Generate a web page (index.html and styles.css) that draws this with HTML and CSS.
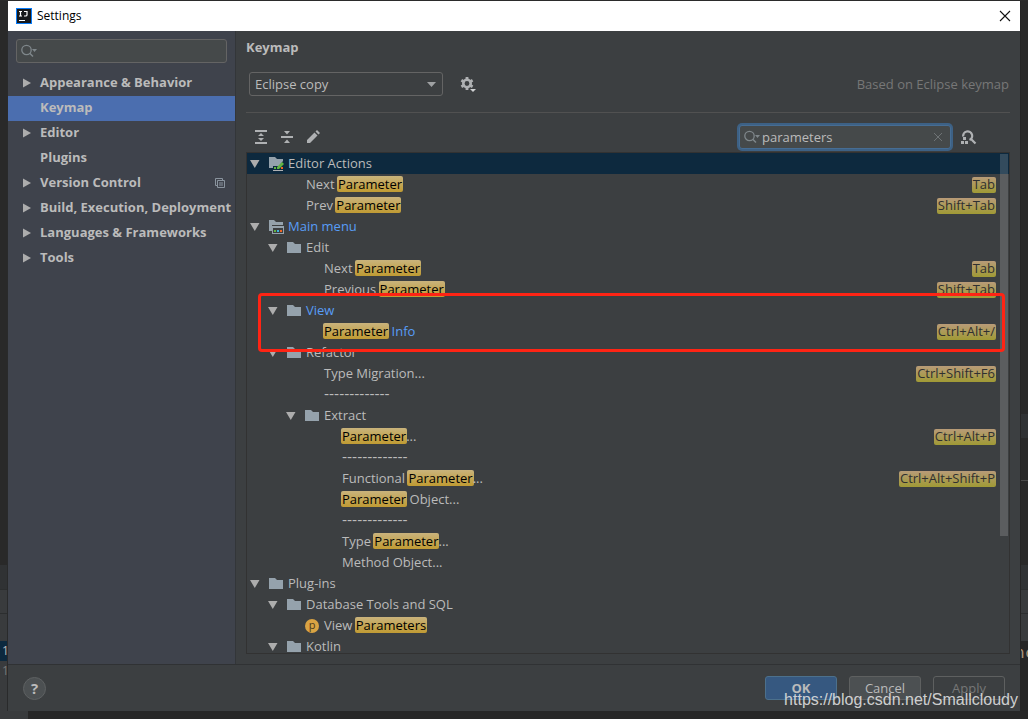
FILE: index.html
```html
<!DOCTYPE html>
<html lang="en">
<head>
<meta charset="utf-8">
<title>Settings</title>
<link rel="stylesheet" href="styles.css">
</head>
<body>
<svg class="defs" aria-hidden="true">
  <symbol id="folder" viewBox="0 0 16 14"><path fill="#95a2ac" d="M0 1h6l2 2h6v9H0z"/></symbol>
  <symbol id="folder-edit" viewBox="0 0 16 14">
    <path fill="#95a2ac" d="M0 0h6l2 2h6v2l-4 5H4v2H0z"/>
    <path fill="#62b543" d="M5 10h2v2H5zM8 10l5-5 2 2-5 5H8z"/>
    <path fill="#f26522" d="M12 10h2v2h-2z"/><path fill="#afb1b3" d="M4 13h10v1H4z"/>
  </symbol>
  <symbol id="folder-menu" viewBox="0 0 16 14">
    <path fill="#95a2ac" d="M0 0h5l2 2h7v3H3v6H0z"/>
    <path fill="#95a2ac" fill-rule="evenodd" d="M3 6h12v8H3zM4 8v5h10V8z"/>
    <path fill="#62b543" d="M5 10h2v2H5z"/><path fill="#40b6e0" d="M8 10h2v2H8z"/><path fill="#f26522" d="M11 10h2v2h-2z"/>
  </symbol>
  <symbol id="down" viewBox="0 0 10 8"><path fill="#adadad" d="M0 0h9.500L4.750 8z"/></symbol>
  <symbol id="right" viewBox="0 0 8 10"><path fill="#adadad" d="M0 0.500 8 5 0 9.500z"/></symbol>
  <symbol id="search" viewBox="0 0 17 14">
    <circle cx="5.500" cy="6" r="4.700" fill="none" stroke="#7f878b" stroke-width="1.300"/>
    <path d="m8.700 9.200 3.300 3.300" stroke="#7f878b" stroke-width="1.500"/><path fill="#7f878b" d="M11 5h5l-2.500 3z"/>
  </symbol>
</svg>
<div class="desktop">
  <div class="strip strip-left">
    <div class="code"></div><div class="gutter h24"></div><div class="panel h24"></div>
    <div class="panel h28"></div><div class="selected h20">1</div><div class="panel plain h50">1</div>
  </div>
  <main class="dialog">
    <header class="titlebar">
      <svg class="logo" viewBox="0 0 16 16"><rect width="16" height="16" fill="#087cfa"/><rect x="1" y="1" width="14" height="14" fill="#17191c"/><path d="M3 3.500h3M4.500 3.500V8M3 8h3M8 3.500h3V7q0 1-1.500 1H8M3 12.500h6" fill="none" stroke="#fff" stroke-width="1.200"/></svg>
      <h1>Settings</h1>
      <button class="close" aria-label="Close"><svg viewBox="0 0 10 10"><path d="m0 0 10 10M10 0 0 10" stroke="#111" stroke-width="1.100"/></svg></button>
    </header>
    <div class="body">
      <aside class="sidebar">
        <div class="field"><svg class="i-search"><use href="#search"/></svg><input aria-label="Search settings"></div>
        <nav>
          <a href="#appearance"><svg class="i-right"><use href="#right"/></svg>Appearance &amp; Behavior</a>
          <a href="#keymap" class="leaf current">Keymap</a>
          <a href="#editor"><svg class="i-right"><use href="#right"/></svg>Editor</a>
          <a href="#plugins" class="leaf">Plugins</a>
          <a href="#vcs"><svg class="i-right"><use href="#right"/></svg>Version Control
            <svg class="i-project" viewBox="0 0 10 10"><path d="M2.500 7.500h-2v-7h7v2M2.500 2.500h7v7h-7zM4 5h4M4 7h4" fill="none" stroke="#8a949e"/></svg></a>
          <a href="#build"><svg class="i-right"><use href="#right"/></svg>Build, Execution, Deployment</a>
          <a href="#languages"><svg class="i-right"><use href="#right"/></svg>Languages &amp; Frameworks</a>
          <a href="#tools"><svg class="i-right"><use href="#right"/></svg>Tools</a>
        </nav>
      </aside>
      <section class="content">
        <h2>Keymap</h2>
        <div class="scheme">
          <div class="combo">
            <select aria-label="Keymap scheme"><option>Eclipse copy</option></select>
            <svg class="combo-arrow" viewBox="0 0 9 5"><path fill="#9fa1a3" d="M0 0h9L4.500 5z"/></svg>
          </div>
          <button class="icon" aria-label="Scheme actions"><svg width="16" height="16" viewBox="0 0 16 16">
            <circle cx="7" cy="7.500" r="3.700" fill="none" stroke="#afb1b3" stroke-width="2.600"/>
            <path d="M7 1v2.500M7 11.500V14M1.400 4.300l2.100 1.200M10.500 9.500l2.100 1.200M1.400 10.700l2.100-1.200M10.500 5.500l2.100-1.200" stroke="#afb1b3" stroke-width="2.800"/>
            <path fill="#3c3f41" d="M9 12h7v4H9z"/><path fill="#d0d2d3" d="M10 13h6l-3 3z"/></svg></button>
          <span class="based">Based on Eclipse keymap</span>
        </div>
        <div class="toolbar">
          <button class="icon" aria-label="Expand all"><svg width="14" height="14" viewBox="0 0 14 14" fill="#afb1b3"><path d="M1 0h12v2H1zM1 12h12v2H1zM7 3l3 3H4zM7 11l3-3H4z"/></svg></button>
          <button class="icon" aria-label="Collapse all"><svg width="14" height="14" viewBox="0 0 14 14" fill="#afb1b3"><path d="M1 6h12v2H1zM4 1h6L7 4.500zM4 13h6L7 9.500z"/></svg></button>
          <button class="icon" aria-label="Edit shortcut"><svg width="14" height="14" viewBox="0 0 14 14" fill="#afb1b3"><path d="m1 10 7.500-7.500 3 3L4 13H1zM9.500 1.500 11 0l3 3-1.500 1.500z"/></svg></button>
          <div class="field focus"><svg class="i-search"><use href="#search"/></svg><input aria-label="Search actions" value="parameters">
            <button class="clear" aria-label="Clear"><svg viewBox="0 0 8 8"><path d="m0 0 8 8M8 0 0 8" stroke="#6e7375"/></svg></button></div>
          <button class="icon" aria-label="Find by shortcut"><svg width="16" height="15" viewBox="0 0 16 15"><path d="M2.200 6.500A4.500 4.500 0 1 1 8.500 10M9.500 8.500l5 5" fill="none" stroke="#afb1b3" stroke-width="2.200"/><path fill="#afb1b3" d="M2 7h3v3H2zM0 11h3v3H0zM4 11h3v3H4z"/></svg></button>
        </div>
        <div class="results">
          <ul class="tree">
            <li class="row picked"><svg class="i-down"><use href="#down"/></svg><svg class="i-folder"><use href="#folder-edit"/></svg>Editor Actions</li>
            <li class="row l1"><span class="name">Next <mark>Parameter</mark></span><kbd>Tab</kbd></li>
            <li class="row l1"><span class="name">Prev <mark>Parameter</mark></span><kbd>Shift+Tab</kbd></li>
            <li class="row changed"><svg class="i-down"><use href="#down"/></svg><svg class="i-folder"><use href="#folder-menu"/></svg>Main menu</li>
            <li class="row l1"><svg class="i-down"><use href="#down"/></svg><svg class="i-folder"><use href="#folder"/></svg>Edit</li>
            <li class="row l2"><span class="name">Next <mark>Parameter</mark></span><kbd>Tab</kbd></li>
            <li class="row l2"><span class="name">Previous <mark>Parameter</mark></span><kbd>Shift+Tab</kbd></li>
            <li class="row l1 changed"><svg class="i-down"><use href="#down"/></svg><svg class="i-folder"><use href="#folder"/></svg>View</li>
            <li class="row l2 changed"><span class="name"><mark>Parameter</mark> Info</span><kbd>Ctrl+Alt+/</kbd></li>
            <li class="row l1"><svg class="i-down"><use href="#down"/></svg><svg class="i-folder"><use href="#folder"/></svg>Refactor</li>
            <li class="row l2"><span class="name">Type Migration...</span><kbd>Ctrl+Shift+F6</kbd></li>
            <li class="row l2"><span class="name divider">-------------</span></li>
            <li class="row l2"><svg class="i-down"><use href="#down"/></svg><svg class="i-folder"><use href="#folder"/></svg>Extract</li>
            <li class="row l3"><span class="name"><mark>Parameter</mark>...</span><kbd>Ctrl+Alt+P</kbd></li>
            <li class="row l3"><span class="name divider">-------------</span></li>
            <li class="row l3"><span class="name">Functional <mark>Parameter</mark>...</span><kbd>Ctrl+Alt+Shift+P</kbd></li>
            <li class="row l3"><span class="name"><mark>Parameter</mark> Object...</span></li>
            <li class="row l3"><span class="name divider">-------------</span></li>
            <li class="row l3"><span class="name">Type <mark>Parameter</mark>...</span></li>
            <li class="row l3"><span class="name">Method Object...</span></li>
            <li class="row"><svg class="i-down"><use href="#down"/></svg><svg class="i-folder"><use href="#folder"/></svg>Plug-ins</li>
            <li class="row l1"><svg class="i-down"><use href="#down"/></svg><svg class="i-folder"><use href="#folder"/></svg>Database Tools and SQL</li>
            <li class="row l2 with-icon"><span class="prop">p</span><span>View <mark>Parameters</mark></span></li>
            <li class="row l1"><svg class="i-down"><use href="#down"/></svg><svg class="i-folder"><use href="#folder"/></svg>Kotlin</li>
          </ul>
          <div class="thumb"></div>
          <div class="callout"></div>
        </div>
      </section>
    </div>
    <footer class="footer">
      <button class="help" aria-label="Help">?</button>
      <button class="btn primary">OK</button>
      <button class="btn">Cancel</button>
      <button class="btn off" disabled>Apply</button>
    </footer>
  </main>
  <div class="strip strip-right">
    <div class="code"></div><div class="gutter h24"></div><div class="code h42"></div><div class="code lined h85"></div>
    <div class="gutter h24"></div><div class="panel h24"></div><div class="panel h28"></div><div class="code-text h70">nc</div>
  </div>
  <div class="bottom"></div>
  <div class="watermark">https://blog.csdn.net/Smallcloudy</div>
</div>
</body>
</html>
```
FILE: styles.css
```css
* { box-sizing: border-box; }
body {
  margin: 0;
  background: #2b2b2b;
  color: #bbbbbb;
  font: 13px/21px "Open Sans", "Noto Sans", sans-serif;
}
button, input, select { font: inherit; color: inherit; }
button { padding: 0; border: 0; background: none; }
svg { display: block; flex: none; }
h1, h2, ul { margin: 0; padding: 0; }
.defs { position: absolute; width: 0; height: 0; }

.desktop {
  position: relative;
  display: grid;
  grid-template: 1fr 8px / 8px 1fr 8px;
  height: 100vh;
  padding-top: 1px;
  overflow: hidden;
}
.strip { display: flex; flex-direction: column; overflow: hidden; }
.strip-left { border-right: 1px solid #292a2b; }
.strip-right { border-left: 1px solid #252525; }
.strip > :first-child { flex: 1; }
.code { background: #292929; }
.lined { border-top: 1px solid #4a4a4a; }
.gutter { background: #303234; }
.panel { background: #393b3d; border-top: 1px solid #2c2e2f; }
.selected { background: #0d293e; }
.selected, .plain { padding-left: 2px; font-size: 12px; line-height: 20px; }
.plain { color: #777777; border: 0; }
.code-text {
  background: #262626;
  color: #a8937a;
  font: 16px/24px "DejaVu Sans Mono", monospace;
  text-indent: -6px;
}
.h20 { height: 20px; }
.h24 { height: 24px; }
.h28 { height: 28px; }
.h42 { height: 42px; }
.h50 { height: 50px; }
.h70 { height: 70px; }
.h85 { height: 85px; }
.bottom { grid-column: 1 / -1; background: linear-gradient(90deg, #393b3d 28px, #272727 28px); }

.dialog { display: flex; flex-direction: column; min-width: 0; min-height: 0; background: #3c3f41; }
.titlebar {
  display: flex;
  align-items: center;
  gap: 5px;
  height: 30px;
  padding: 0 10px 1px 8px;
  background: #ffffff;
  color: #000000;
}
.titlebar h1 { flex: 1; font-size: 12px; font-weight: 400; }
.logo { width: 16px; height: 16px; }
.close svg { width: 10px; height: 10px; overflow: visible; }

.body { display: flex; flex: 1; min-height: 0; }
.sidebar {
  flex: none;
  width: 228px;
  padding-top: 8px;
  background: #3f434c;
  border-right: 1px solid #333639;
}
.sidebar .field { margin: 0 8px 8px; }
.field {
  display: flex;
  align-items: center;
  height: 24px;
  padding: 0 4px;
  background: #45494a;
  border: 1px solid #646464;
  border-radius: 3px;
}
.field input { flex: 1; min-width: 0; padding: 0 1px; border: 0; outline: 0; background: none; }
.i-search { width: 17px; height: 14px; }
.sidebar a {
  display: flex;
  align-items: center;
  gap: 9px;
  height: 25px;
  padding: 0 10px 2px 15px;
  color: #bbbbbb;
  font-weight: 700;
  text-decoration: none;
  white-space: nowrap;
}
.sidebar .leaf { padding-left: 32px; }
.sidebar .current { background: #4b6eaf; }
.i-right { width: 8px; height: 10px; }
.i-project { width: 10px; height: 10px; margin-left: auto; }

.content { display: flex; flex: 1; flex-direction: column; min-width: 0; padding: 6px 10px 10px; }
h2 { font-size: 13px; line-height: 20px; }
.scheme {
  display: flex;
  align-items: center;
  gap: 17px;
  height: 56px;
  padding: 0 1px 1px 3px;
  border-bottom: 1px solid #515151;
}
.combo { position: relative; width: 194px; }
.combo select {
  appearance: none;
  display: block;
  width: 100%;
  height: 24px;
  padding: 0 5px;
  background: #3c3f41;
  border: 1px solid #646464;
  border-radius: 3px;
}
.combo-arrow { position: absolute; top: 10px; right: 7px; width: 9px; height: 5px; pointer-events: none; }
.based { margin-left: auto; color: #777777; }
.toolbar { display: flex; align-items: center; gap: 12px; padding: 10px 33px 1px 8px; }
.focus {
  width: 212px;
  margin: 2px -2px 2px auto;
  padding: 0 8px 0 4px;
  border-color: #466d94;
  box-shadow: 0 0 0 2px #3d6185;
}
.clear svg { width: 8px; height: 8px; overflow: visible; }

.results { position: relative; flex: 1; min-height: 0; border: 1px solid #323232; }
.tree { height: 100%; overflow: hidden; list-style: none; }
.row { display: flex; align-items: center; height: 21px; padding: 0 13px 0 3px; white-space: pre; }
.l1 { padding-left: 21px; }
.l2 { padding-left: 39px; }
.l3 { padding-left: 57px; }
.picked { background: #0d293e; }
.changed { color: #589df6; }
.i-down { width: 10px; height: 8px; margin-right: 9px; }
.i-folder { width: 16px; height: 14px; margin-right: 3px; }
.name { margin-left: 38px; }
.divider { font-family: "DejaVu Sans", sans-serif; font-size: 14px; }
.with-icon { padding-left: 58px; }
.prop {
  width: 14px;
  height: 14px;
  margin-right: 5px;
  border-radius: 50%;
  background: #d9a343;
  color: #4a3a1c;
  font-size: 11px;
  line-height: 12px;
  text-align: center;
}
mark, kbd { padding: 0 1px; border-radius: 2px; line-height: 16px; }
mark { display: inline-block; margin: 0 -1px; background: linear-gradient(#c9b37c, #c09b33); color: #000000; }
kbd {
  margin-left: auto;
  padding-bottom: 1px;
  background: linear-gradient(#b89b78, #a09a35);
  color: #303030;
  font-family: inherit;
  font-size: 13px;
  line-height: 15px;
}
.thumb { position: absolute; top: 1px; right: 1px; width: 8px; height: 382px; background: rgba(255, 255, 255, 0.16); }
.callout { position: absolute; top: 140px; left: 11px; right: 4px; height: 59px; border: 3px solid #ff2414; border-radius: 4px; }

.footer {
  display: flex;
  align-items: center;
  gap: 12px;
  height: 47px;
  padding: 0 15px;
  border-top: 1px solid #303234;
}
.help {
  width: 23px;
  height: 23px;
  margin-right: auto;
  border: 1px solid #5e6162;
  border-radius: 50%;
  background: #4c5052;
  font-size: 15px;
  font-weight: 700;
  line-height: 20px;
}
.btn { width: 72px; height: 24px; background: #4c5052; border: 1px solid #5e6060; border-radius: 3px; }
.primary { background: #365880; border-color: #4c708c; font-weight: 700; }
.off { background: none; color: #777777; }
.watermark {
  position: absolute;
  right: 10px;
  bottom: 8px;
  color: rgba(225, 225, 225, 0.9);
  font: 16px/22px "Liberation Sans", Arial, sans-serif;
}
```
